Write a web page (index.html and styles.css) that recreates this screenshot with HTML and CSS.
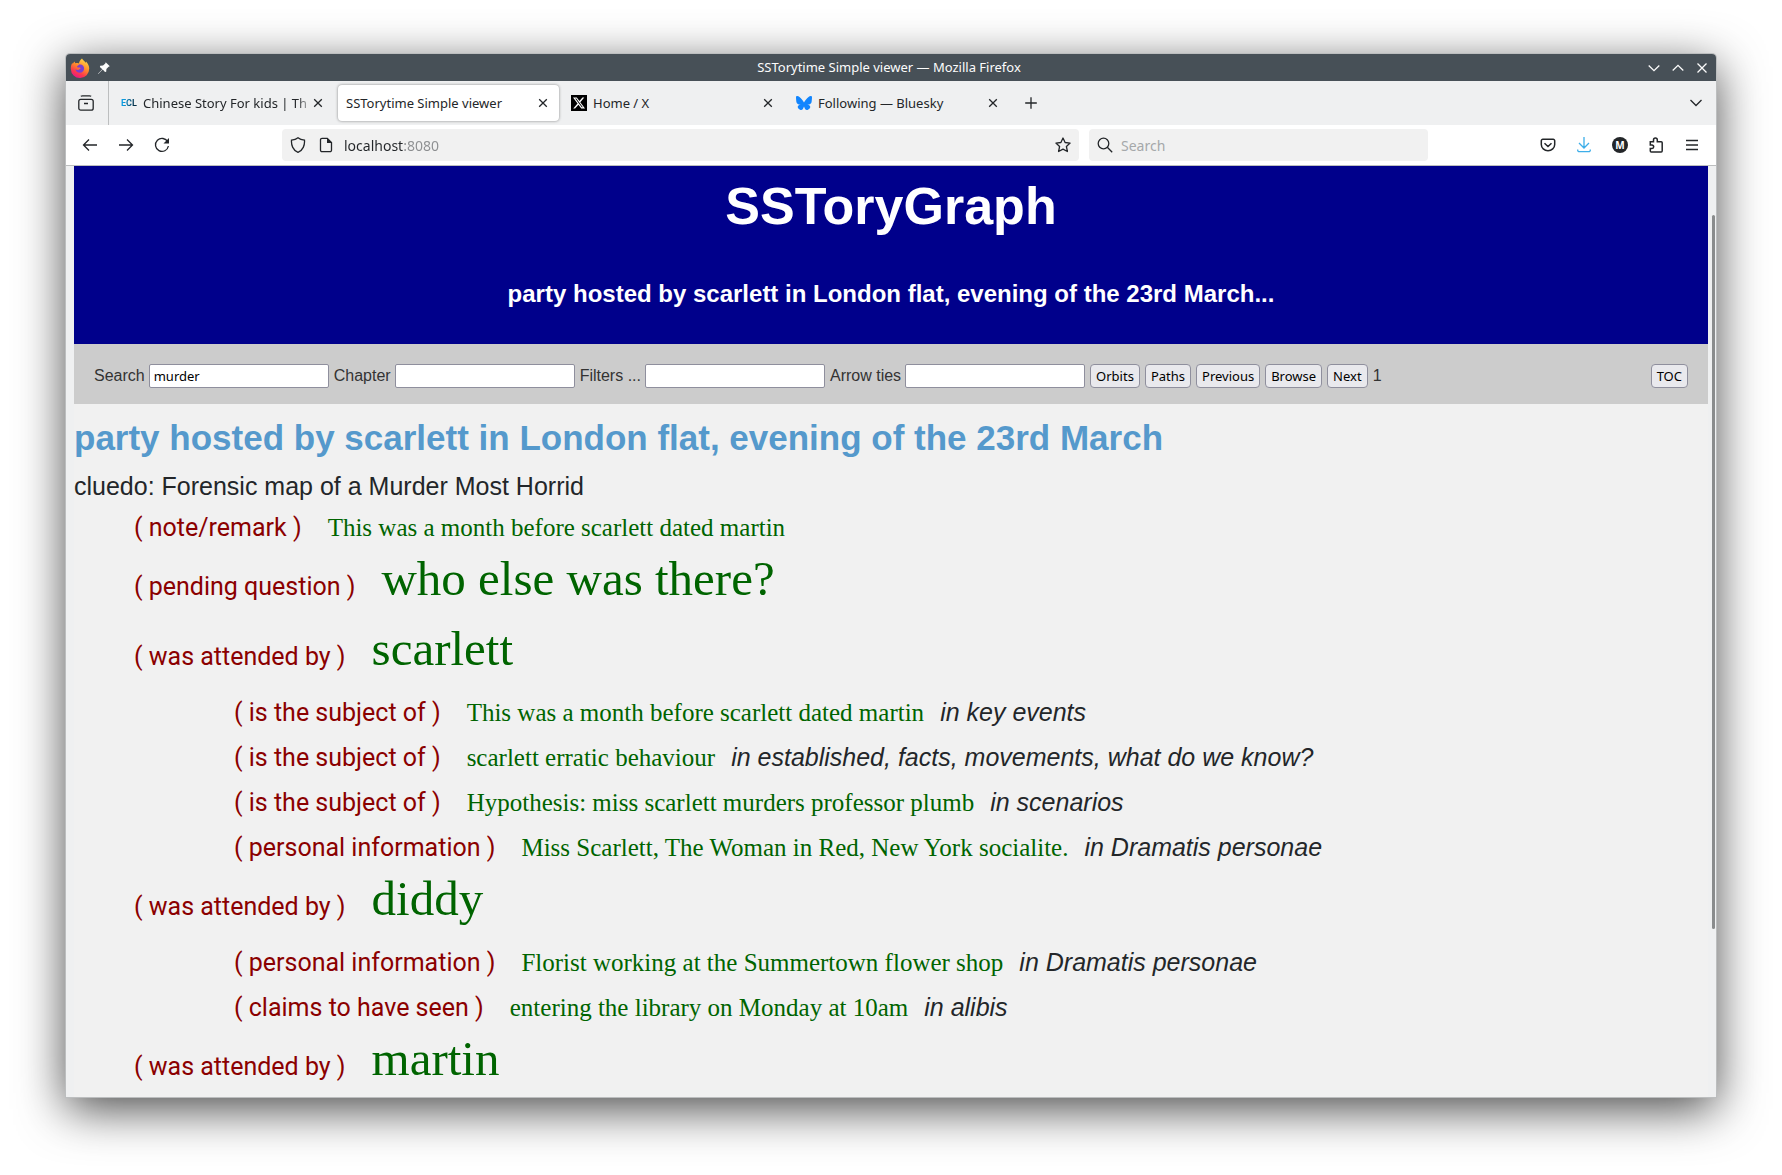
FILE: index.html
```html
<!DOCTYPE html>
<html lang="en">
<head>
<meta charset="utf-8">
<title>SSTorytime Simple viewer</title>
<link rel="stylesheet" href="styles.css">
</head>
<body>
<div class="window">
  <header class="titlebar">
    <div class="titlebar-side">
      <svg class="firefox" width="20" height="20" viewBox="0 0 20 20" aria-hidden="true">
        <defs>
          <linearGradient id="fox" x1="0.8" y1="0" x2="0.3" y2="1"><stop offset="0" stop-color="#ffe14a"/><stop offset="0.45" stop-color="#ff8a2b"/><stop offset="0.75" stop-color="#fb3a4c"/><stop offset="1" stop-color="#e8158a"/></linearGradient>
        </defs>
        <path fill="url(#fox)" d="M12 .5c.6 1.4 2.6 2.6 3.6 4.2.3-.3.4-.8.4-1.2 2.200 2.400 3.200 4.500 3.200 7.100a9.100 9.100 0 0 1-18.400.4C.7 8.200 1.500 6 2.500 4.800c0 .5.2.9.4 1.200C3.300 4.800 4 4.100 4.800 3.600c0 .7.200 1.300.600 1.700 1.200-.4 2.400-.3 3.500.1C9.200 3.600 10.400 1.500 12 .500z"/>
        <path fill="#7a3fd0" d="M9 6.600c2.900-.9 5.200 1.400 5.100 4 0 2.500-1.900 4.200-4.200 4.200-2.400 0-4.100-1.500-4.500-3.500 1.200.9 2.500.9 3.700.1.900-.6 1.500-.7 1.500-1.200 0-.5-.700-.7-2.100-.7-.9 0-1.300-.6-1.500-1.300.5-.2 1.500-.6 2-1.600z"/>
      </svg>
      <svg width="14" height="14" viewBox="0 0 14 14" aria-hidden="true"><path fill="#fcfcfc" d="M8.700 1.200 12.800 5.300 11.600 5.700 9.400 8 9.200 10.800 8 11 5.700 8.600 1.300 12.900 1 12.700 5.300 8.300 2.900 6 3.200 4.800 6 4.600 8.300 2.400z"/></svg>
    </div>
    <div class="window-title">SSTorytime Simple viewer — Mozilla Firefox</div>
    <div class="titlebar-side titlebar-end">
      <button class="icon-button" aria-label="Minimize"><svg width="12" height="12" viewBox="0 0 12 12"><path d="M.7 3.500 6 8.700 11.300 3.500"/></svg></button>
      <button class="icon-button" aria-label="Maximize"><svg width="12" height="12" viewBox="0 0 12 12"><path d="M.7 8.500 6 3.300 11.300 8.500"/></svg></button>
      <button class="icon-button" aria-label="Close"><svg width="12" height="12" viewBox="0 0 12 12"><path d="M1.500 1.500l9 9M10.500 1.500l-9 9"/></svg></button>
    </div>
  </header>

  <nav class="tabbar" aria-label="Tabs">
    <button class="icon-button firefox-view" aria-label="Firefox View"><svg width="16" height="16" viewBox="0 0 16 16"><rect x=".8" y="4.300" width="14.400" height="10.900" rx="2"/><path d="M2.800 1.200Q3.500.8 4.500.8h7q1 0 1.700.4M6 8.500h4"/></svg></button>
    <div class="tab">
      <span class="ecl" aria-hidden="true">ECL</span>
      <a class="tab-label tab-label-faded" href="#ecl">Chinese Story For kids | Th</a>
      <button class="icon-button" aria-label="Close tab"><svg width="10" height="10" viewBox="0 0 10 10"><path d="M1.200 1.200l7.600 7.600M8.800 1.200 1.200 8.800"/></svg></button>
    </div>
    <div class="tab tab-active">
      <a class="tab-label" href="#viewer">SSTorytime Simple viewer</a>
      <button class="icon-button" aria-label="Close tab"><svg width="10" height="10" viewBox="0 0 10 10"><path d="M1.200 1.200l7.600 7.600M8.800 1.200 1.200 8.800"/></svg></button>
    </div>
    <div class="tab">
      <svg class="favicon" width="16" height="16" viewBox="0 0 32 32" aria-hidden="true"><path d="M0 0h32v32H0z" fill="#000"/><path transform="translate(4 4)" fill="#fff" fill-rule="evenodd" d="M18.901 1.153h3.680l-8.040 9.190L24 22.846h-7.406l-5.800-7.584-6.638 7.584H.474l8.600-9.830L0 1.154h7.594l5.243 6.932zM17.610 20.644h2.039L6.486 3.240H4.298z"/></svg>
      <a class="tab-label" href="#x">Home / X</a>
      <button class="icon-button" aria-label="Close tab"><svg width="10" height="10" viewBox="0 0 10 10"><path d="M1.200 1.200l7.600 7.600M8.800 1.200 1.200 8.800"/></svg></button>
    </div>
    <div class="tab">
      <svg class="favicon" width="16" height="16" viewBox="0 0 24 24" aria-hidden="true"><path fill="#1185fe" d="M5.202 2.857C7.954 4.922 10.913 9.110 12 11.358c1.087-2.247 4.046-6.436 6.798-8.501C20.783 1.366 24 .213 24 3.883c0 .732-.42 6.156-.667 7.037-.856 3.061-3.978 3.842-6.755 3.370 4.854.826 6.089 3.562 3.422 6.299-5.065 5.196-7.280-1.304-7.847-2.970-.104-.305-.152-.448-.153-.327 0-.121-.05.022-.153.327-.568 1.666-2.782 8.166-7.847 2.970-2.667-2.737-1.432-5.473 3.422-6.300-2.777.473-5.899-.308-6.755-3.369C.42 10.040 0 4.615 0 3.883c0-3.670 3.217-2.517 5.202-1.026"/></svg>
      <a class="tab-label" href="#bluesky">Following — Bluesky</a>
      <button class="icon-button" aria-label="Close tab"><svg width="10" height="10" viewBox="0 0 10 10"><path d="M1.200 1.200l7.600 7.600M8.800 1.200 1.200 8.800"/></svg></button>
    </div>
    <button class="icon-button new-tab" aria-label="New tab"><svg width="12" height="12" viewBox="0 0 12 12"><path d="M6 .200v11.600M.200 6h11.600"/></svg></button>
    <button class="icon-button all-tabs" aria-label="List all tabs"><svg width="12" height="12" viewBox="0 0 12 12"><path d="M.500 3 6 8.500 11.500 3"/></svg></button>
  </nav>

  <div class="navbar">
    <button class="icon-button nav-button" aria-label="Back"><svg width="16" height="16" viewBox="0 0 16 16"><path d="M15 8H1.500M7 2.500 1.500 8 7 13.500"/></svg></button>
    <button class="icon-button nav-button" aria-label="Forward"><svg width="16" height="16" viewBox="0 0 16 16"><path d="M1 8h13.500M9 2.500 14.500 8 9 13.500"/></svg></button>
    <button class="icon-button nav-button" aria-label="Reload"><svg width="16" height="16" viewBox="0 0 16 16"><path d="M13.800 5A6.500 6.500 0 1 0 14.400 9"/><path class="solid" d="M15 1v5.500H9.500z"/></svg></button>
    <div class="spring"></div>
    <div class="field url-field">
      <svg width="16" height="16" viewBox="0 0 16 16" aria-hidden="true"><path d="M8 .800C9.500 2 12 2.900 14.500 3.200 14.900 8 13 13.500 8 15.300 3 13.500 1.100 8 1.500 3.200 4 2.900 6.500 2 8 .800z"/></svg>
      <svg width="16" height="16" viewBox="0 0 16 16" aria-hidden="true"><path d="M9.300 1.300H4a1.500 1.500 0 0 0-1.500 1.500v10.400A1.500 1.500 0 0 0 4 14.700h8a1.500 1.500 0 0 0 1.500-1.500V5.500z"/><path class="solid" d="M9 1v5h5z"/></svg>
      <input class="url-input" type="text" aria-label="Address" value="localhost:8080">
      <svg width="16" height="16" viewBox="0 0 16 16" aria-hidden="true"><path stroke-linejoin="round" d="M8 1l2.100 4.500 5 .6-3.700 3.400 1 5L8 12.100l-4.400 2.400 1-5L.9 6.100l5-.6z"/></svg>
    </div>
    <div class="field search-field">
      <svg width="16" height="16" viewBox="0 0 16 16" aria-hidden="true"><circle cx="6.500" cy="6.500" r="5.300"/><path d="M10.300 10.300l4.900 4.900"/></svg>
      <input type="text" aria-label="Web search" placeholder="Search">
    </div>
    <div class="spring"></div>
    <button class="icon-button nav-button" aria-label="Save to Pocket"><svg width="16" height="16" viewBox="0 0 16 16"><path stroke-width="1.500" d="M2.800 2.300h10.400a1.500 1.500 0 0 1 1.500 1.500v3.700a6.700 6.200 0 0 1-13.400 0V3.800a1.500 1.500 0 0 1 1.500-1.500zM4.500 6.300 8 9.500l3.500-3.200"/></svg></button>
    <button class="icon-button nav-button download" aria-label="Downloads"><svg width="16" height="16" viewBox="0 0 16 16"><path d="M8 0v10.500M3 6l5 5 5-5M1.700 12.500v.700a1.500 1.500 0 0 0 1.500 1.500h9.600a1.500 1.500 0 0 0 1.500-1.500v-.700"/></svg></button>
    <button class="icon-button nav-button" aria-label="Account"><span class="account">M</span></button>
    <button class="icon-button nav-button" aria-label="Extensions"><svg width="16" height="16" viewBox="0 0 16 16"><path stroke-width="1.500" d="M2.300 4.700H5.500V3a1.900 1.900 0 0 1 3.800 0v1.700h3.900q1 0 1 1v8q0 1.300-1 1.300H3.300q-1 0-1-1v-2.500H4a1.700 1.700 0 0 0 0-3.400H2.300z"/></svg></button>
    <button class="icon-button nav-button" aria-label="Menu"><svg width="16" height="16" viewBox="0 0 16 16"><path d="M2 3.500h12M2 8h12M2 12.500h12"/></svg></button>
  </div>

  <div class="viewport">
    <div class="scroll-thumb"></div>
    <div class="page">
      <div class="banner">
        <h1>SSToryGraph</h1>
        <h3>party hosted by scarlett in London flat, evening of the 23rd March...</h3>
      </div>
      <form class="controls">
        <label for="name">Search</label><input id="name" type="text" value="murder">
        <label for="chapter">Chapter</label><input id="chapter" type="text">
        <label for="context">Filters ...</label><input id="context" type="text">
        <label for="arrows">Arrow ties</label><input id="arrows" type="text">
        <button type="button">Orbits</button>
        <button type="button">Paths</button>
        <button type="button">Previous</button>
        <button type="button">Browse</button>
        <button type="button">Next</button>
        <span>1</span>
        <button class="toc" type="button">TOC</button>
      </form>
      <main>
        <h2>party hosted by scarlett in London flat, evening of the 23rd March</h2>
        <p class="chapter">cluedo: Forensic map of a Murder Most Horrid</p>
        <div class="row"><span class="arrow">( note/remark )</span><a href="#n1">This was a month before scarlett dated martin</a></div>
        <div class="row row-big"><span class="arrow">( pending question )</span><a href="#n2">who else was there?</a></div>
        <div class="row row-big"><span class="arrow">( was attended by )</span><a href="#n3">scarlett</a></div>
        <div class="row row-nested"><span class="arrow">( is the subject of )</span><a href="#n4">This was a month before scarlett dated martin</a><i>in key events</i></div>
        <div class="row row-nested"><span class="arrow">( is the subject of )</span><a href="#n5">scarlett erratic behaviour</a><i>in established, facts, movements, what do we know?</i></div>
        <div class="row row-nested"><span class="arrow">( is the subject of )</span><a href="#n6">Hypothesis: miss scarlett murders professor plumb</a><i>in scenarios</i></div>
        <div class="row row-nested"><span class="arrow">( personal information )</span><a href="#n7">Miss Scarlett, The Woman in Red, New York socialite.</a><i>in Dramatis personae</i></div>
        <div class="row row-big"><span class="arrow">( was attended by )</span><a href="#n8">diddy</a></div>
        <div class="row row-nested"><span class="arrow">( personal information )</span><a href="#n9">Florist working at the Summertown flower shop</a><i>in Dramatis personae</i></div>
        <div class="row row-nested"><span class="arrow">( claims to have seen )</span><a href="#n10">entering the library on Monday at 10am</a><i>in alibis</i></div>
        <div class="row row-big"><span class="arrow">( was attended by )</span><a href="#n11">martin</a></div>
      </main>
    </div>
  </div>
</div>
</body>
</html>
```
FILE: styles.css
```css
* { box-sizing: border-box; }

body {
  margin: 0;
  height: 100vh;
  padding: 54px 66px 78px;
  display: flex;
  background: #fff;
  color: #232629;
  font-family: "Noto Sans", sans-serif;
  font-size: 13px;
}

.window {
  flex: 1;
  min-width: 0;
  display: flex;
  flex-direction: column;
  border-radius: 4px 4px 0 0;
  box-shadow: 0 0 0 1px #bcbebf, 0 12px 48px rgba(0, 0, 0, 0.72);
}

svg {
  flex: none;
  display: block;
  fill: none;
  stroke: currentColor;
  stroke-width: 1.3px;
}
svg [fill] { stroke: none; }
.solid { fill: currentColor; stroke: none; }

.icon-button {
  flex: none;
  display: flex;
  align-items: center;
  justify-content: center;
  padding: 0;
  border: 0;
  background: none;
  color: inherit;
  font: inherit;
}

/* Title bar */
.titlebar {
  flex: none;
  display: flex;
  align-items: center;
  height: 27px;
  border-radius: 4px 4px 0 0;
  background: #475057;
  color: #fcfcfc;
}
.titlebar-side {
  flex: 1 1 0;
  display: flex;
  align-items: center;
  gap: 7px;
  padding-left: 4px;
}
.titlebar-end { justify-content: flex-end; gap: 12px; padding: 0 8px 0 0; }
.window-title { line-height: 27px; }

/* Tabs */
.tabbar {
  flex: none;
  display: flex;
  align-items: center;
  height: 44px;
  background: #eff0f1;
}
.firefox-view {
  width: 43px;
  height: 44px;
  margin-right: 2px;
  padding-right: 2px;
  border-right: 1px solid #bcbebf;
}
.tab {
  flex: 0 1 221px;
  min-width: 0;
  height: 36px;
  margin: 0 2px;
  padding: 0 11px 0 8px;
  display: flex;
  align-items: center;
  border-radius: 4px;
}
.tab-active { background: #fff; box-shadow: 0 0 3px rgba(0, 0, 0, 0.45); }
.favicon { margin-right: 6px; }
.ecl {
  width: 16px;
  margin-right: 6px;
  font: bold 9px/16px Roboto, sans-serif;
  color: transparent;
  background: linear-gradient(100deg, #0a9be0 20%, #062f45 80%);
  background-clip: text;
}
.tab-label {
  flex: 1;
  min-width: 0;
  overflow: hidden;
  white-space: nowrap;
  color: inherit;
  text-decoration: none;
}
.tab-label-faded { mask-image: linear-gradient(to left, transparent, #000 16px); }
.new-tab { width: 34px; height: 34px; margin-left: 3px; }
.all-tabs { margin-left: auto; width: 40px; height: 34px; }

/* Navigation bar */
.navbar {
  flex: none;
  display: flex;
  align-items: center;
  height: 41px;
  padding: 0 6px;
  border-bottom: 1px solid #bcbebf;
  background: #fff;
}
.nav-button { width: 36px; height: 32px; }
.spring { flex: 1 1 102px; }
.field {
  display: flex;
  align-items: center;
  height: 32px;
  min-width: 0;
  border-radius: 4px;
  padding: 0 8px;
  background: #f1f1f1;
}
.url-field { flex: 8 1 797px; gap: 12px; }
.search-field { flex: 3 1 339px; margin-left: 10px; gap: 8px; }
.field input {
  flex: 1;
  min-width: 0;
  border: 0;
  padding: 2px 0 0;
  background: none;
  color: #232629;
  font: 14px/20px "Noto Sans", sans-serif;
  outline: 0;
}
.field input::placeholder { color: #a5a8aa; opacity: 1; }
/* host in dark, port in grey */
.field .url-input {
  color: transparent;
  background: linear-gradient(to right, #232629 59px, #8c8e90 59px);
  background-clip: text;
}
.url-field svg:nth-of-type(2) { margin-right: -2px; }
.download { color: #3daee9; }
.account {
  width: 16px;
  border-radius: 8px;
  background: #232629;
  color: #fff;
  font: bold 10px/16px "Noto Sans", sans-serif;
}

/* Web page */
.viewport {
  flex: 1;
  min-height: 0;
  position: relative;
  overflow: hidden;
  padding: 0 8px;
  background: #eff0f1;
  font-family: "Liberation Sans", Arial, sans-serif;
}
.scroll-thumb {
  position: absolute;
  top: 49px;
  right: 1px;
  width: 3px;
  height: 714px;
  border-radius: 2px;
  background: #8a8c8d;
}
.page { min-height: 100%; background: #f1f1f1; }
h1, h2, h3, p { margin: 0; }

.banner {
  height: 178px;
  padding-top: 10px;
  background: #00008b;
  color: #fff;
  text-align: center;
}
h1 { font-size: 52px; line-height: 60px; }
h3 { margin-top: 43px; font-size: 24px; line-height: 30px; }

.controls {
  display: flex;
  align-items: center;
  gap: 5px;
  padding: 20px 20px 16px;
  background: #ccc;
  color: #333;
  font-size: 16px;
  line-height: 22px;
}
.controls label { margin-right: -1px; }
.controls input, .controls button {
  height: 24px;
  border: 1px solid #8f8f9d;
  color: #000;
  font: 13px/20px "Noto Sans", sans-serif;
}
.controls input {
  flex: 0 1 180px;
  min-width: 0;
  padding: 0 4px;
  border-radius: 2px;
  background: #fff;
}
.controls button {
  padding: 0 5px;
  border-radius: 4px;
  background: #e9e9ed;
}
.controls .toc { margin-left: auto; }

main { padding-top: 14px; }
h2 { margin-bottom: 14px; font-size: 35px; line-height: 40px; color: #5599cc; }
.chapter { margin-bottom: 4px; font-size: 25px; line-height: 29px; }

.row {
  display: flex;
  align-items: baseline;
  height: 45px;
  padding-left: 60px;
  font-size: 25px;
  line-height: 45px;
  white-space: nowrap;
}
.row-nested { padding-left: 160px; }
.arrow { margin-right: 26px; font-family: Roboto, sans-serif; color: #8b0000; }
.row a {
  margin-right: 16px;
  font-family: "Liberation Serif", serif;
  color: #006400;
  text-decoration: none;
}
.row-big { height: 70px; }
.row-big a { font-size: 49px; line-height: 58px; }
```
